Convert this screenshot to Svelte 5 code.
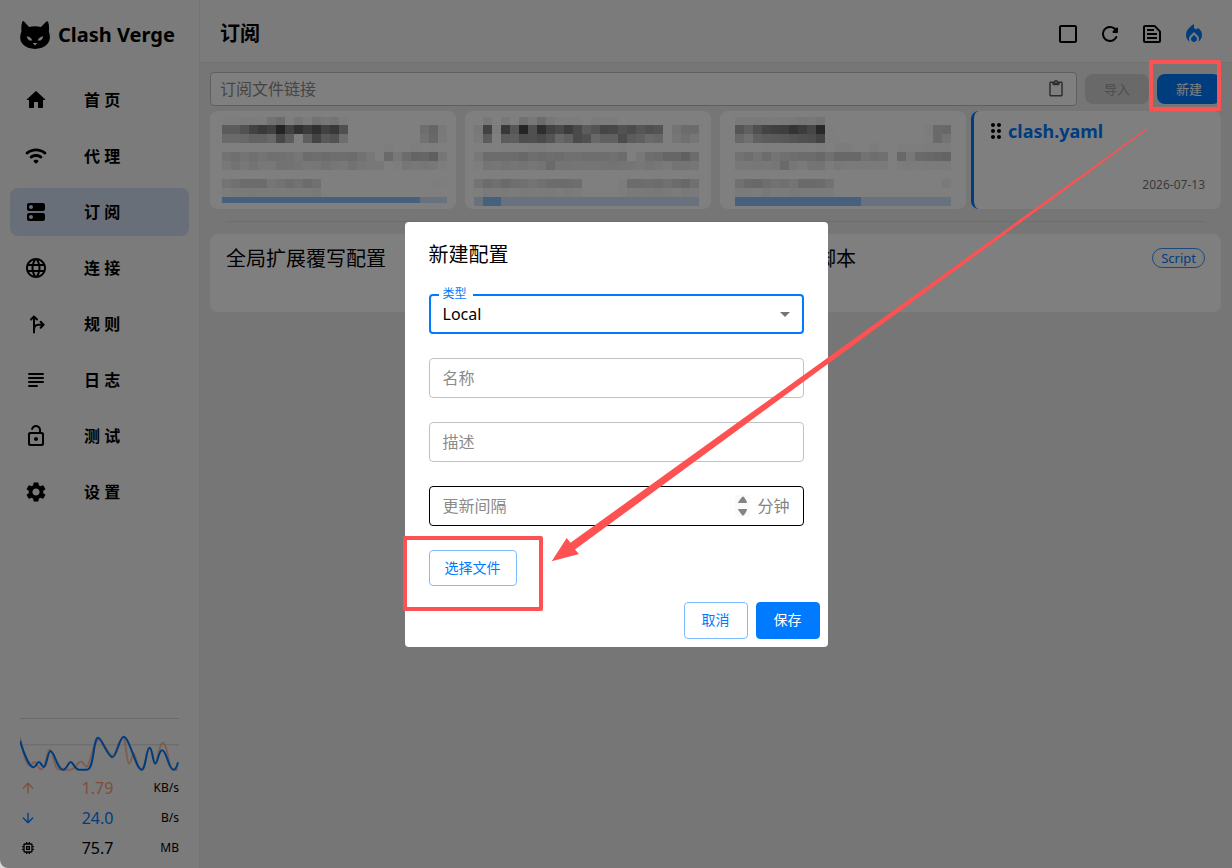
<script>
  const paths = {
    home: 'M10 19v-5h4v5c0 .55.45 1 1 1h3c.55 0 1-.45 1-1v-7h1.7c.46 0 .68-.57.33-.87L12.67 3.6c-.38-.34-.96-.34-1.34 0l-8.36 7.53c-.34.3-.13.87.33.87H5v7c0 .55.45 1 1 1h3c.55 0 1-.45 1-1z',
    wifi: 'M2.06 10.06c.51.51 1.32.56 1.87.1 4.67-3.84 11.45-3.84 16.13-.01.56.46 1.38.42 1.89-.09.59-.59.55-1.57-.1-2.1-5.71-4.67-13.97-4.67-19.69 0-.65.52-.7 1.5-.1 2.1zm7.76 7.76 1.47 1.47c.39.39 1.02.39 1.41 0l1.47-1.47c.47-.47.37-1.28-.23-1.59-1.22-.63-2.68-.63-3.91 0-.57.31-.68 1.12-.21 1.59zm-3.73-3.73c.49.49 1.26.54 1.83.13 2.44-1.73 5.72-1.73 8.16 0 .57.4 1.34.36 1.83-.13l.01-.01c.6-.6.56-1.62-.13-2.11-3.44-2.49-8.13-2.49-11.58 0-.69.5-.73 1.51-.12 2.12z',
    dns: 'M19 13H5c-1.1 0-2 .9-2 2v4c0 1.1.9 2 2 2h14c1.1 0 2-.9 2-2v-4c0-1.1-.9-2-2-2zM7 19c-1.1 0-2-.9-2-2s.9-2 2-2 2 .9 2 2-.9 2-2 2zM19 3H5c-1.1 0-2 .9-2 2v4c0 1.1.9 2 2 2h14c1.1 0 2-.9 2-2V5c0-1.1-.9-2-2-2zM7 9c-1.1 0-2-.9-2-2s.9-2 2-2 2 .9 2 2-.9 2-2 2z',
    globe: 'M11.99 2C6.47 2 2 6.48 2 12s4.47 10 9.99 10C17.52 22 22 17.52 22 12S17.52 2 11.99 2zm6.93 6h-2.95c-.32-1.25-.78-2.45-1.38-3.56 1.84.63 3.37 1.91 4.33 3.56zM12 4.04c.83 1.2 1.48 2.53 1.91 3.96h-3.82c.43-1.43 1.08-2.76 1.91-3.96zM4.26 14C4.1 13.36 4 12.69 4 12s.1-1.36.26-2h3.38c-.08.66-.14 1.32-.14 2 0 .68.06 1.34.14 2H4.26zm.82 2h2.95c.32 1.25.78 2.45 1.38 3.56-1.84-.63-3.37-1.9-4.33-3.56zm2.95-8H5.08c.96-1.66 2.49-2.93 4.33-3.56C8.81 5.55 8.35 6.75 8.03 8zM12 19.96c-.83-1.2-1.48-2.53-1.91-3.96h3.82c-.43 1.43-1.08 2.76-1.91 3.96zM14.34 14H9.66c-.09-.66-.16-1.32-.16-2 0-.68.07-1.35.16-2h4.68c.09.65.16 1.32.16 2 0 .68-.07 1.34-.16 2zm.25 5.56c.6-1.11 1.06-2.31 1.38-3.56h2.95c-.96 1.65-2.49 2.93-4.33 3.56zM16.36 14c.08-.66.14-1.32.14-2 0-.68-.06-1.34-.14-2h3.38c.16.64.26 1.31.26 2s-.1 1.36-.26 2h-3.38z',
    lock: 'M12 13c-1.1 0-2 .9-2 2s.9 2 2 2 2-.9 2-2-.9-2-2-2zm6-5h-1V6c0-2.76-2.24-5-5-5-2.28 0-4.27 1.54-4.84 3.75-.14.54.18 1.08.72 1.22.53.14 1.08-.18 1.22-.72C9.44 3.93 10.63 3 12 3c1.65 0 3 1.35 3 3v2H6c-1.1 0-2 .9-2 2v10c0 1.1.9 2 2 2h12c1.1 0 2-.9 2-2V10c0-1.1-.9-2-2-2zm0 11c0 .55-.45 1-1 1H7c-.55 0-1-.45-1-1v-8c0-.55.45-1 1-1h10c.55 0 1 .45 1 1v8z',
    gear: 'M19.14 12.94c.04-.3.06-.61.06-.94 0-.32-.02-.64-.07-.94l2.03-1.58c.18-.14.23-.41.12-.61l-1.92-3.32c-.12-.22-.37-.29-.59-.22l-2.39.96c-.5-.38-1.03-.7-1.62-.94l-.36-2.54c-.04-.24-.24-.41-.48-.41h-3.84c-.24 0-.43.17-.47.41l-.36 2.54c-.59.24-1.13.57-1.62.94l-2.39-.96c-.22-.08-.47 0-.59.22L2.74 8.87c-.12.21-.08.47.12.61l2.03 1.58c-.05.3-.09.63-.09.94s.02.64.07.94l-2.03 1.58c-.18.14-.23.41-.12.61l1.92 3.32c.12.22.37.29.59.22l2.39-.96c.5.38 1.03.7 1.62.94l.36 2.54c.05.24.24.41.48.41h3.84c.24 0 .44-.17.47-.41l.36-2.54c.59-.24 1.13-.56 1.62-.94l2.39.96c.22.08.47 0 .59-.22l1.92-3.32c.12-.22.07-.47-.12-.61l-2.01-1.58zM12 15.6c-1.98 0-3.6-1.62-3.6-3.6s1.62-3.6 3.6-3.6 3.6 1.62 3.6 3.6-1.62 3.6-3.6 3.6z',
    square: 'M19 5v14H5V5h14m0-2H5c-1.1 0-2 .9-2 2v14c0 1.1.9 2 2 2h14c1.1 0 2-.9 2-2V5c0-1.1-.9-2-2-2z',
    refresh: 'M17.65 6.35c-1.63-1.63-3.94-2.57-6.48-2.31-3.67.37-6.69 3.35-7.1 7.02C3.52 15.91 7.27 20 12 20c3.19 0 5.93-1.87 7.21-4.56.32-.67-.16-1.44-.9-1.44-.37 0-.72.2-.88.53-1.13 2.43-3.84 3.97-6.8 3.31-2.22-.49-4.01-2.3-4.48-4.52C5.31 9.44 8.26 6 12 6c1.66 0 3.14.69 4.22 1.78l-1.51 1.51c-.63.63-.19 1.71.7 1.71H19c.55 0 1-.45 1-1V6.41c0-.89-1.08-1.34-1.71-.71l-.64.65z',
    snippet: 'M14.17 5L19 9.83V19H5V5h9.17m0-2H5c-1.1 0-2 .9-2 2v14c0 1.1.9 2 2 2h14c1.1 0 2-.9 2-2V9.83c0-.53-.21-1.04-.59-1.41l-4.83-4.83c-.37-.38-.88-.59-1.41-.59zM7 15h10v2H7v-2zm0-4h10v2H7v-2zm0-4h7v2H7V7z',
    fire: 'm12 12.9-2.13 2.09c-.56.56-.87 1.29-.87 2.07C9 18.68 10.35 20 12 20s3-1.32 3-2.94c0-.78-.31-1.52-.87-2.07L12 12.9zM16 6l-.44.55C14.38 8.02 12 7.19 12 5.3V2S4 6 4 13c0 2.92 1.56 5.47 3.89 6.86-.56-.79-.89-1.76-.89-2.8 0-1.32.52-2.56 1.47-3.5L12 10.1l3.53 3.47c.95.93 1.47 2.17 1.47 3.5 0 1.02-.31 1.96-.85 2.75 1.89-1.15 3.29-3.06 3.71-5.3.66-3.55-1.07-6.9-3.86-8.52z',
    paste: 'M19 2h-4.18C14.4.84 13.3 0 12 0c-1.3 0-2.4.84-2.82 2H5c-1.1 0-2 .9-2 2v16c0 1.1.9 2 2 2h14c1.1 0 2-.9 2-2V4c0-1.1-.9-2-2-2zm-7 0c.55 0 1 .45 1 1s-.45 1-1 1-1-.45-1-1 .45-1 1-1zm7 18H5V4h2v1c0 1.1.9 2 2 2h6c1.1 0 2-.9 2-2V4h2v16z',
    memory: 'M15 9H9v6h6V9zm-2 4h-2v-2h2v2zm8-2V9h-2V7c0-1.1-.9-2-2-2h-2V3h-2v2h-2V3H9v2H7c-1.1 0-2 .9-2 2v2H3v2h2v2H3v2h2v2c0 1.1.9 2 2 2h2v2h2v-2h2v2h2v-2h2c1.1 0 2-.9 2-2v-2h2v-2h-2v-2h2zm-4 6H7V7h10v10z',
    drag: 'M11 18c0 1.1-.9 2-2 2s-2-.9-2-2 .9-2 2-2 2 .9 2 2zm-2-8c-1.1 0-2 .9-2 2s.9 2 2 2 2-.9 2-2-.9-2-2-2zm0-6c-1.1 0-2 .9-2 2s.9 2 2 2 2-.9 2-2-.9-2-2-2zm6 4c1.1 0 2-.9 2-2s-.9-2-2-2-2 .9-2 2 .9 2 2 2zm0 2c-1.1 0-2 .9-2 2s.9 2 2 2 2-.9 2-2-.9-2-2-2zm0 6c-1.1 0-2 .9-2 2s.9 2 2 2 2-.9 2-2-.9-2-2-2z'
  };

  const strokes = {
    fork: 'M10 20.5V5M7 7.5l3-3 3 3M10 18c0-3.5 1.5-5.2 4.5-5.2H19M16.6 9.800l3 3-3 3',
    lines: 'M5 6h14M5 10h14M5 14h14M5 18h8',
    up: 'M12 19V6M5 12l7-7 7 7',
    down: 'M12 5v13M5 12l7 7 7-7'
  };

  const nav = [
    { label: '首 页', icon: 'home' },
    { label: '代 理', icon: 'wifi' },
    { label: '订 阅', icon: 'dns', active: true },
    { label: '连 接', icon: 'globe' },
    { label: '规 则', icon: 'fork' },
    { label: '日 志', icon: 'lines' },
    { label: '测 试', icon: 'lock' },
    { label: '设 置', icon: 'gear' }
  ];

  const tools = [
    { icon: 'square', label: '批量操作' },
    { icon: 'refresh', label: '更新所有订阅' },
    { icon: 'snippet', label: '查看运行时配置' },
    { icon: 'fire', label: '重新激活订阅', accent: true }
  ];

  const stats = [
    { icon: 'up', value: '1.79', unit: 'KB/s', tone: 'upload' },
    { icon: 'down', value: '24.0', unit: 'B/s', tone: 'download' },
    { icon: 'memory', value: '75.7', unit: 'MB', tone: 'memory' }
  ];

  // Pixelated private profiles: one hex level per 9px cell, 80 is white.
  const rowTops = [6, 14, 23, 32, 41, 50, 68, 77];
  const rowHeights = [8, 9, 9, 9, 9, 9, 9, 9];
  const masked = [
    {
      left: 12, barFrom: 0, used: 22, total: 25, barHeight: 6,
      rows: [
        '7d 7d 7c 7c 7d 72 6c 7e 76 7c 72 77 74 7c',
        '5c 5c 52 42 3a 41 24 42 30 3b 30 41 38 50 80 80 80 80 80 80 80 80 6e 66 79',
        '6a 6a 68 62 62 68 48 5c 80 5e 44 58 52 6e 80 80 80 80 80 80 80 80 72 68 7a',
        '80 80 7f 7f 80 80 80 80 80 80 80 80 80 80 80 80 80 80 7d 7f 7f 7d 80 7e',
        '72 6f 74 70 74 70 70 72 76 6c 6e 6c 6e 6e 6c 72 78 80 6a 78 6c 64 66 5f 76',
        '78 72 78 73 78 78 72 72 74 78 76 72 76 78 72 76 78 78 80 7d 76 78 76 78 7d',
        '74 70 6c 6c 6c 76 72 6e 72 6c 70 80 80 80 80 80 80 80 80 80 80 80 80 7e 7e',
        '7c 7a 7a 79 7a 7b 7b 7a 7a 7b 79'
      ]
    },
    {
      left: 9, barFrom: 1, used: 3, total: 25, barHeight: 9,
      rows: [
        '80 78 7f 78 7f 71 78 6c 77 7c 7c 7c 80 7b 7c 7c',
        '78 42 7c 38 56 25 50 2e 42 4a 3c 4a 5c 54 46 48 52 4c 56 50 54 80 74 6c 6c',
        '7a 5c 80 5c 5e 4e 50 4a 54 68 60 4a 50 68 60 60 4c 5c 60 6a 66 80 76 70 76',
        '80 80 80 7e 7e 7e 7c 7c 7e 7e 7e 7e 7e 7e 7e 7e 7d',
        '78 6c 6c 6c 6c 68 6e 6c 6e 6c 70 70 6e 6e 6e 70 6c 80 78 6e 6c 66 66 60 6c',
        '7d 74 76 73 75 73 76 74 6a 74 74 75 75 75 74 72 74 75 77 74 77 7a 74 74 76',
        '74 6c 70 6a 6e 70 74 70 6c 6c 6c 6e 80 80 80 80 7c 6c 6c 6e 6c 70 6c 68 70',
        '7e 7a 7b 7a 7c 7a 7b 7b 7a 7c 7a 7c 80 80 80 80 7d 7a 7a 79 78 7a 7c 79 7a'
      ]
    },
    {
      left: 15, barFrom: 0, used: 14, total: 24, barHeight: 9,
      rows: [
        '7a 7a 79 7a 7b 7a 79 76 78 74',
        '56 60 50 44 40 3e 34 3c 46 28 7e 80 80 80 80 80 80 80 80 80 80 7c 6a 68',
        '68 70 60 5c 5a 58 54 50 4e 44 7e 80 80 80 80 80 80 80 80 80 80 7d 6a 74',
        '80 80 80 7e 7e 7e 7e 7e 7f 7d 7f 7c 7c 80 80 7c 80 80 7d 7d 7d 7c 7c 7c',
        '72 6e 74 6c 74 70 6e 6c 6c 68 70 68 68 68 72 6e 70 80 68 78 6a 68 66 64',
        '78 78 76 78 76 6a 76 7a 74 74 7c 78 7a 7a 7a 7a 7a 80 7c 7b 7c 7b 7b 7b',
        '70 6a 68 6e 72 70 74 6a 6a 6c 72 80 80 80 80 80 80 80 80 80 80 80 80 7a',
        '7a 7b 7c 78 7b 7b 79 7a 7a 7b 7b'
      ]
    }
  ];

  const cells = (row) => row.split(' ').map((hex) => Math.min(255, parseInt(hex, 16) * 2));

  let kind = $state('local');
  let link = $state('');
  let name = $state('');
  let desc = $state('');
  let interval = $state(null);
</script>

{#snippet icon(id, size)}
  <svg class="icon" width={size} height={size} viewBox="0 0 24 24" aria-hidden="true">
    {#if strokes[id]}
      <path d={strokes[id]} fill="none" stroke="currentColor" stroke-width="2" stroke-linecap="round" stroke-linejoin="round" />
    {:else}
      <path d={paths[id]} fill="currentColor" />
    {/if}
  </svg>
{/snippet}

<div class="app">
  <aside class="sidebar">
    <div class="brand">
      <svg width="30" height="28" viewBox="60 62 90 85" aria-hidden="true">
        <path d="M67 63q3-2 6 2l14 15q18-4 36 0l15-15q4-4 7 0q4 12 2 28q4 12 3 22q-4 28-45 32q-41-4-45-32q0-12 4-22q-2-16 3-30z" fill="#000" />
        <path d="M80 108q12 1 17 13q-14 3-17-13zM130 108q-12 1-17 13q14 3 17-13zM98 129h14l-7 7z" fill="#f7f7f7" />
      </svg>
      <span>Clash Verge</span>
    </div>

    <nav>
      {#each nav as item}
        <a href="#{item.icon}" class:active={item.active} aria-current={item.active ? 'page' : undefined}>
          {@render icon(item.icon, 24)}
          <span>{item.label}</span>
        </a>
      {/each}
    </nav>

    <div class="traffic">
      <svg class="graph" viewBox="60 54 480 158" preserveAspectRatio="none" aria-hidden="true">
        <path d="M60 55.5H540M60 133.5H540" stroke="#d4d4d4" stroke-width="3" />
        <path class="curve up" d="M60 112C68 150 78 196 90 196C95 196 98 185 103 185C110 185 115 207 124 207C138 207 140 148 150 148C162 148 160 208 180 208H212C228 208 234 184 244 184C252 184 254 199 261 199C272 199 280 118 300 118C312 118 325 166 339 166C350 166 358 114 370 114C380 114 382 190 389 190C396 190 398 160 404 160C412 170 414 208 427 208C440 208 441 145 451 145C460 145 463 188 468 188C476 188 480 128 491 128C505 128 508 208 523 208H537" />
        <path class="curve down" d="M60 122C70 155 88 201 101 201C108 201 111 185 117 185C123 185 126 200 132 200C141 200 143 153 152 153C165 153 172 208 190 208C202 208 205 185 213 185C221 185 225 208 238 208H262C285 208 280 113 296 113C306 113 325 171 339 171C352 171 360 110 373 110C390 110 410 208 427 208C440 208 441 143 451 143C460 143 461 190 468 190C476 190 478 150 489 150C503 150 508 208 523 208C530 208 534 200 537 186" />
      </svg>
      {#each stats as stat}
        <div class="stat {stat.tone}">
          {@render icon(stat.icon, 16)}
          <span class="value">{stat.value}</span>
          <span class="unit">{stat.unit}</span>
        </div>
      {/each}
    </div>
  </aside>

  <main>
    <header>
      <h1>订阅</h1>
      <div class="tools">
        {#each tools as tool}
          <button class:accent={tool.accent} aria-label={tool.label}>{@render icon(tool.icon, 24)}</button>
        {/each}
      </div>
    </header>

    <section class="content">
      <div class="import">
        <div class="link">
          <input type="text" bind:value={link} placeholder="订阅文件链接" aria-label="订阅文件链接" />
          <button class="paste" aria-label="粘贴">{@render icon('paste', 18)}</button>
        </div>
        <button class="small" disabled>导入</button>
        <button class="small primary">新建</button>
      </div>

      <div class="profiles">
        {#each masked as card}
          <article class="card">
            <svg width="246" height="98" viewBox="0 0 246 98" shape-rendering="crispEdges" aria-hidden="true">
              {#each card.rows as row, r}
                {#each cells(row) as level, c}
                  <rect x={card.left + c * 9} y={rowTops[r]} width="9" height={rowHeights[r]} fill="rgb({level},{level},{level})" />
                {/each}
              {/each}
              <rect x={card.left} y="86" width={card.total * 9} height={card.barHeight} fill="#d0e4fa" />
              <rect x={card.left + card.barFrom * 9} y="86" width={(card.used - card.barFrom) * 9} height={card.barHeight} fill="#8cc2fc" />
            </svg>
          </article>
        {/each}
        <article class="card selected">
          <div class="name">
            {@render icon('drag', 24)}
            <h2>clash.yaml</h2>
          </div>
          <time datetime="2026-07-13">2026-07-13</time>
        </article>
      </div>

      <hr />

      <div class="extensions">
        <article class="card"><h3>全局扩展覆写配置</h3></article>
        <article class="card"><h3>全局扩展脚本</h3><span class="chip">Script</span></article>
      </div>
    </section>
  </main>

  <div class="backdrop">
    <form class="dialog" role="dialog" aria-modal="true" aria-labelledby="dialog-title" onsubmit={(e) => e.preventDefault()}>
      <h2 id="dialog-title">新建配置</h2>
      <div class="fields">
        <div class="field focused">
          <label for="kind">类型</label>
          <select id="kind" bind:value={kind}>
            <option value="remote">Remote</option>
            <option value="local">Local</option>
          </select>
          <svg width="24" height="24" viewBox="0 0 24 24" aria-hidden="true"><path d="M7 10l5 5 5-5z" fill="#757575" /></svg>
        </div>
        <div class="field"><input type="text" bind:value={name} placeholder="名称" aria-label="名称" /></div>
        <div class="field"><input type="text" bind:value={desc} placeholder="描述" aria-label="描述" /></div>
        <div class="field hovered">
          <input type="number" bind:value={interval} placeholder="更新间隔" aria-label="更新间隔" />
          <svg class="spinner" width="15" height="22" viewBox="0 0 15 22" aria-hidden="true">
            <rect width="15" height="22" fill="#fafafa" />
            <path d="M3 8q0-1 4-6q1-1 2 0q3 4 3 6zM3 14h9q0 2-3 6q-1 1-2 0q-4-5-4-6z" fill="#848484" />
          </svg>
          <span class="suffix">分钟</span>
        </div>
        <button type="button" class="outlined file">选择文件</button>
      </div>
      <div class="actions">
        <button type="button" class="outlined">取消</button>
        <button type="submit" class="filled">保存</button>
      </div>
    </form>
  </div>

  <svg class="annotations" aria-hidden="true">
    <g fill="none" stroke="#fe5252" stroke-width="4" stroke-linejoin="round">
      <rect x="1151" y="62" width="68" height="47" />
      <rect x="405" y="538" width="136" height="71" />
    </g>
    <path d="M1146.5 128.5L1147.3 129.6L575 549.5L579 554L551.7 561.3L566.7 538L570.5 542.7Z" fill="#fe5252" />
  </svg>
</div>

<style>
  :global(body) {
    margin: 0;
    background: #d8d8d8;
  }

  .app,
  .app * {
    box-sizing: border-box;
  }

  .app {
    position: relative;
    display: flex;
    min-height: 100vh;
    overflow: hidden;
    border-bottom-left-radius: 8px;
    background: #ececec;
    color: #000;
    font: 16px/24px 'Noto Sans', 'Noto Sans CJK SC', sans-serif;
  }

  h1, h2, h3 {
    margin: 0;
    font-weight: 400;
  }

  button, input, select {
    margin: 0;
    padding: 0;
    border: 0;
    background: none;
    color: inherit;
    font: inherit;
  }

  svg {
    display: block;
    flex: none;
  }

  .sidebar {
    display: flex;
    flex: 0 0 200px;
    flex-direction: column;
    border-right: 1px solid #e6e6e6;
    background: #f6f6f6;
  }

  .brand {
    display: flex;
    align-items: center;
    gap: 8px;
    height: 70px;
    padding-left: 20px;
    font-size: 20px;
    font-weight: 700;
  }

  nav {
    display: flex;
    flex-direction: column;
    gap: 8px;
    padding: 6px 10px;
  }

  nav a {
    display: flex;
    align-items: center;
    gap: 36px;
    height: 48px;
    padding: 0 14px;
    border-radius: 8px;
    color: #000;
    font-weight: 700;
    text-decoration: none;
  }

  nav a.active {
    background: #d0dff3;
  }

  .traffic {
    margin-top: auto;
    padding: 0 20px 5px;
  }

  .graph {
    width: 100%;
    height: 53px;
    margin-bottom: 2px;
  }

  .curve {
    fill: none;
    stroke-width: 6;
  }

  .curve.up {
    stroke: #fc9b76;
    opacity: 0.6;
  }

  .curve.down {
    stroke: #007aff;
  }

  .stat {
    display: grid;
    grid-template-columns: 16px 1fr 44px;
    align-items: center;
    height: 30px;
  }

  .value {
    padding-left: 24px;
    text-align: center;
  }

  .unit {
    color: #000;
    font-size: 12px;
    text-align: right;
  }

  .stat.upload {
    color: #fc9b76;
  }

  .stat.download {
    color: #007aff;
  }

  main {
    flex: 1;
    min-width: 0;
  }

  header {
    display: flex;
    align-items: center;
    justify-content: space-between;
    height: 63px;
    padding: 6px 26px 0 20px;
    border-bottom: 1px solid #e4e4e4;
    background: #f6f6f6;
  }

  h1 {
    font-size: 20px;
    font-weight: 700;
  }

  .tools {
    display: flex;
    gap: 18px;
  }

  .accent {
    color: #007aff;
  }

  .content {
    padding: 9px 11px 10px 10px;
  }

  .import {
    display: flex;
    align-items: center;
    gap: 8px;
    margin-bottom: 5px;
  }

  .link {
    display: flex;
    flex: 1;
    align-items: center;
    height: 34px;
    padding: 0 11px 0 9px;
    border: 1px solid #bebebe;
    border-radius: 4px;
    background: #fff;
  }

  .link input {
    flex: 1;
    min-width: 0;
  }

  input::placeholder {
    color: #8b8b8b;
    opacity: 1;
  }

  input:focus, select:focus {
    outline: none;
  }

  .paste {
    color: #5c5c5c;
  }

  .small {
    width: 64px;
    height: 30px;
    border-radius: 8px;
    font-size: 13px;
  }

  .small:disabled {
    background: #d2d2d2;
    color: #9b9b9b;
  }

  .small.primary {
    background: #007aff;
    color: #fff;
  }

  .profiles {
    display: grid;
    grid-template-columns: repeat(4, minmax(0, 1fr));
    gap: 9px;
  }

  .card {
    overflow: hidden;
    border-radius: 8px;
    background: #fff;
  }

  .selected {
    display: flex;
    flex-direction: column;
    justify-content: space-between;
    margin-left: -4px;
    padding: 8px 16px 12px 10px;
    border-left: 3px solid #007aff;
  }

  .name {
    display: flex;
    align-items: center;
  }

  .name h2 {
    color: #007aff;
    font-size: 18px;
    font-weight: 700;
  }

  time {
    color: #777;
    font-size: 12px;
    text-align: right;
  }

  hr {
    height: 1px;
    margin: 12px 16px;
    border: 0;
    background: #dcdcdc;
  }

  .extensions {
    display: grid;
    grid-template-columns: repeat(2, minmax(0, 1fr));
    gap: 9px;
  }

  .extensions .card {
    display: flex;
    align-items: flex-start;
    justify-content: space-between;
    height: 78px;
    padding: 13px 16px;
  }

  h3 {
    font-size: 20px;
  }

  .chip {
    height: 20px;
    margin-top: 1px;
    padding: 0 8px;
    border: 1px solid #3a92f5;
    border-radius: 10px;
    color: #007aff;
    font-size: 13px;
    line-height: 18px;
  }

  .backdrop {
    position: absolute;
    inset: 0;
    display: flex;
    align-items: center;
    justify-content: center;
    background: rgba(0, 0, 0, 0.5);
  }

  .dialog {
    width: 423px;
    border-radius: 4px;
    background: #fff;
  }

  .dialog h2 {
    padding: 17px 24px 15px;
    font-size: 20px;
    line-height: 32px;
  }

  .fields {
    display: flex;
    flex-direction: column;
    gap: 24px;
    padding: 8px 24px 16px;
  }

  .field {
    position: relative;
    display: flex;
    align-items: center;
    height: 40px;
    padding: 0 13px;
    border: 1px solid #c2c2c2;
    border-radius: 4px;
  }

  .field input,
  .field select {
    flex: 1;
    min-width: 0;
    height: 100%;
    appearance: none;
  }

  .field.focused {
    padding: 0 5px 0 12px;
    border: 2px solid #007aff;
  }

  .field.hovered {
    border-color: #000;
  }

  .field label {
    position: absolute;
    top: -10px;
    left: 8px;
    padding: 0 6px 0 4px;
    background: #fff;
    color: #007aff;
    font-size: 12px;
    line-height: 16px;
  }

  input[type='number'] {
    appearance: textfield;
  }

  .spinner {
    margin-right: 7px;
  }

  .suffix {
    color: #848484;
  }

  .outlined,
  .filled {
    width: 64px;
    height: 37px;
    border: 1px solid #80bdff;
    border-radius: 4px;
    color: #007aff;
    font-size: 14px;
  }

  .filled {
    border-color: #007aff;
    background: #007aff;
    color: #fff;
  }

  .file {
    width: 88px;
    height: 36px;
  }

  .actions {
    display: flex;
    justify-content: flex-end;
    gap: 8px;
    padding: 0 8px 8px;
  }

  .annotations {
    position: absolute;
    inset: 0;
    width: 100%;
    height: 100%;
    pointer-events: none;
  }
</style>
